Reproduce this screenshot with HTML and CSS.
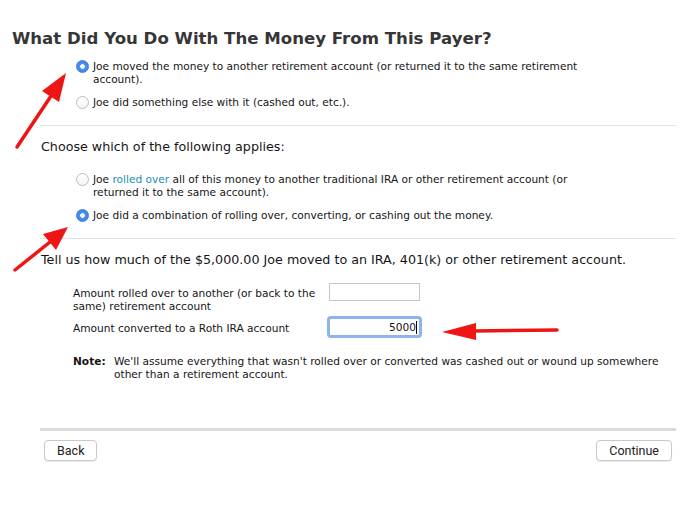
FILE: index.html
```html
<!DOCTYPE html>
<html>
<head>
  <meta charset="UTF-8">
  <title>What Did You Do With The Money From This Payer?</title>
  <link rel="stylesheet" href="styles.css">
</head>
<body>
  <div class="page">
    <h1 class="title">What Did You Do With The Money From This Payer?</h1>

    <div class="content">
      <div class="options first-options">
        <div class="option">
          <span class="radio checked"></span>
          <span class="option-text">Joe moved the money to another retirement account (or returned it to the same retirement account).</span>
        </div>
        <div class="option">
          <span class="radio"></span>
          <span class="option-text">Joe did something else with it (cashed out, etc.).</span>
        </div>
      </div>

      <div class="divider"></div>

      <p class="prompt">Choose which of the following applies:</p>
      <div class="options">
        <div class="option">
          <span class="radio"></span>
          <span class="option-text">Joe <a class="link" href="#">rolled over</a> all of this money to another traditional IRA or other retirement account (or returned it to the same account).</span>
        </div>
        <div class="option">
          <span class="radio checked"></span>
          <span class="option-text">Joe did a combination of rolling over, converting, or cashing out the money.</span>
        </div>
      </div>

      <div class="divider"></div>

      <p class="prompt prompt-amount">Tell us how much of the $5,000.00 Joe moved to an IRA, 401(k) or other retirement account.</p>

      <div class="amounts">
        <div class="amount-row">
          <span class="amount-label">Amount rolled over to another (or back to the same) retirement account</span>
          <span class="field"></span>
        </div>
        <div class="amount-row">
          <span class="amount-label">Amount converted to a Roth IRA account</span>
          <span class="field focused"><span class="value">5000</span><span class="caret"></span></span>
        </div>
      </div>

      <div class="note">
        <span class="note-label">Note:</span>
        <span class="note-text">We'll assume everything that wasn't rolled over or converted was cashed out or wound up somewhere other than a retirement account.</span>
      </div>
    </div>

    <div class="footer">
      <button class="nav-button">Back</button>
      <button class="nav-button">Continue</button>
    </div>
  </div>

  <!-- red annotation arrows drawn over the form -->
  <svg class="annotations" width="692" height="528" viewBox="0 0 692 528">
    <g fill="#ef1515" stroke="#ef1515">
      <line x1="17" y1="147" x2="51" y2="96" stroke-width="3.5" stroke-linecap="round"/>
      <polygon points="66,73 59,102 42,91" stroke="none"/>
      <line x1="15" y1="270" x2="50" y2="242" stroke-width="3.5" stroke-linecap="round"/>
      <polygon points="68,227 56,250 43,234" stroke="none"/>
      <line x1="557" y1="330" x2="474" y2="331" stroke-width="3.5" stroke-linecap="round"/>
      <polygon points="442,332 476,323 476,340" stroke="none"/>
    </g>
  </svg>
</body>
</html>
```

FILE: styles.css
```css
body {
  margin: 0;
  background-color: white;
  font-family: "DejaVu Sans", Verdana, sans-serif;
  color: #151515;
}
.page {
  width: 692px;
  height: 528px;
  overflow: hidden;
}
.title {
  margin: 29px 0 0 12px;
  font-size: 16.6px;
  line-height: 20px;
  font-weight: bold;
  color: #363636;
}
.content {
  margin-left: 40px;
  width: 636px;
}
.options {
  display: flex;
  flex-direction: column;
  gap: 9px;
  padding-left: 36px;
  margin-top: 18px;
}
.first-options {
  margin-top: 11px;
}
.option {
  display: flex;
  align-items: flex-start;
  font-size: 10.6px;
  line-height: 13px;
}
.option:last-child {
  margin-top: 1px;
}
.option-text {
  width: 496px;
}
.radio {
  flex: none;
  box-sizing: border-box;
  width: 13px;
  height: 13px;
  margin: 0 4px 0 0;
  border-radius: 50%;
  border: 1px solid #bdbdbd;
  background: linear-gradient(#ffffff, #f4f4f4);
}
.radio.checked {
  border-color: #3d7fe0;
  background: radial-gradient(circle, #ffffff 0, #ffffff 2px, #4a8ff0 2.6px, #3a82ec 100%);
}
.link {
  color: #1d8fb3;
  text-decoration: none;
}
.divider {
  height: 1px;
  background-color: #e2e2e2;
  margin-top: 16px;
}
.prompt {
  margin: 13px 0 0 1px;
  font-size: 12.7px;
  line-height: 16px;
}
.prompt-amount {
  margin-top: 13px;
}
.amounts {
  display: flex;
  flex-direction: column;
  gap: 5px;
  margin-top: 15px;
  padding-left: 33px;
}
.amount-row {
  display: flex;
  align-items: flex-start;
}
.amount-label {
  width: 244px;
  margin-right: 12px;
  padding-top: 4px;
  font-size: 10.6px;
  line-height: 13px;
}
.field {
  box-sizing: border-box;
  display: flex;
  justify-content: flex-end;
  align-items: center;
  width: 91px;
  height: 18px;
  padding-right: 2px;
  border: 1px solid #c6c6c6;
  background-color: white;
  font-size: 10.6px;
}
.field.focused {
  border-color: #8fb2e8;
  box-shadow: 0 0 0 2px #8db4f0;
  border-radius: 2px;
}
.caret {
  width: 1px;
  height: 13px;
  background-color: #000;
}
.note {
  display: flex;
  margin-top: 19px;
  padding-left: 33px;
  font-size: 10.6px;
  line-height: 13px;
}
.note-label {
  width: 41px;
  flex: none;
  font-weight: bold;
}
.note-text {
  width: 560px;
}
.footer {
  display: flex;
  justify-content: space-between;
  margin-left: 40px;
  width: 636px;
  margin-top: 47px;
  padding: 9px 4px 0 4px;
  box-sizing: border-box;
  border-top: 3px solid #dcdcdc;
}
.nav-button {
  font-family: Roboto, "Liberation Sans", sans-serif;
  font-size: 12.5px;
  color: #222;
  background-color: white;
  border: 1px solid #c9c9c9;
  border-radius: 4px;
  height: 21px;
  padding: 0 12px;
  box-shadow: 0 1px 1px rgba(0, 0, 0, 0.08);
}
.annotations {
  position: absolute;
  left: 0;
  top: 0;
  pointer-events: none;
}
```
